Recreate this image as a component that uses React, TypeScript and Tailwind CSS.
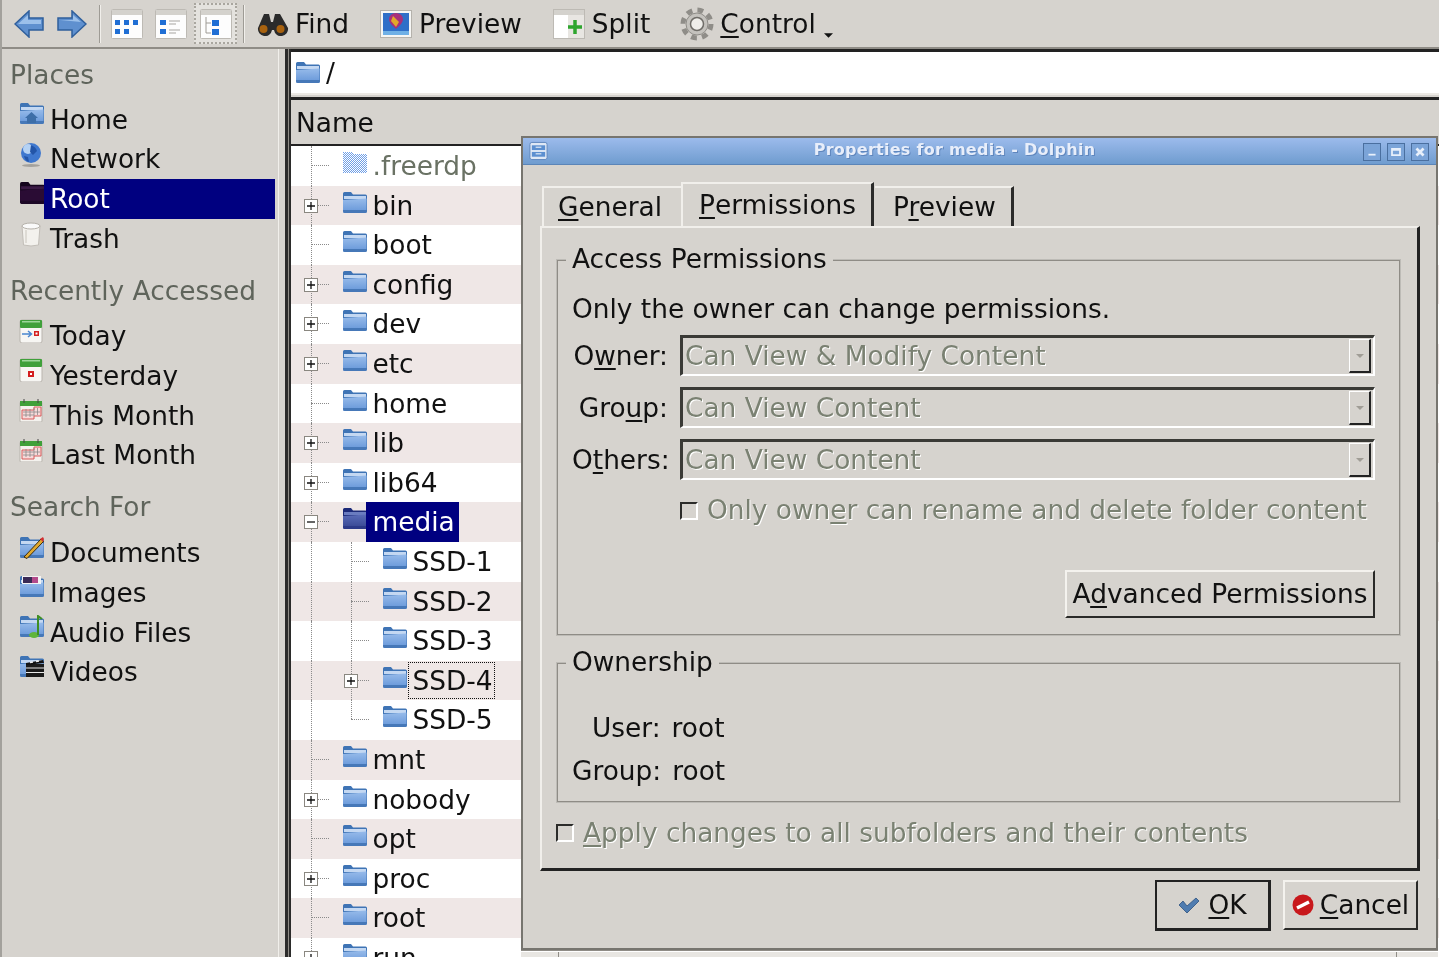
import { ReactNode } from 'react';

type Tone = 'blue' | 'dark' | 'media';

const tones = {
  blue: { back: '#3f74b5', front: 'url(#folderBlue)', strip: '#c4d8f2', low: '#4678b8' },
  dark: { back: '#14041c', front: '#2a0c34', strip: '#3a1a44', low: '#1c0826' },
  media: { back: '#1c2a78', front: 'url(#folderMedia)', strip: '#6a7cc0', low: '#2c3a88' },
};

function Folder({ tone = 'blue', className = 'w-[25px] h-[23px]', children }: { tone?: Tone; className?: string; children?: ReactNode }) {
  const c = tones[tone];
  return (
    <svg viewBox="0 0 25 23" className={className}>
      <path d="M1 2.500Q1 1 2.500 1H9l2 2.500H23.500Q25 3.500 25 5V20Q25 22 23 22H3Q1 22 1 20Z" fill={c.back} />
      <rect x="2" y="5" width="22" height="3" fill={c.strip} />
      <path d="M1 9L24.500 7.500V20Q24.500 22 23 22H3Q1 22 1 20Z" fill={c.front} />
      <path d="M1 19H25V20Q25 22 23 22H3Q1 22 1 20Z" fill={c.low} />
      {children}
    </svg>
  );
}

function DitherFolder() {
  return (
    <svg viewBox="0 0 25 23" className="w-[25px] h-[23px]">
      <defs>
        <pattern id="dither" width="2" height="2" patternUnits="userSpaceOnUse">
          <rect width="2" height="2" fill="#ffffff" />
          <rect width="1" height="1" fill="#6f9fe6" />
          <rect x="1" y="1" width="1" height="1" fill="#6f9fe6" />
        </pattern>
      </defs>
      <path d="M1 1H10L12 3H25V22H1Z" fill="url(#dither)" />
    </svg>
  );
}

function CalendarIcon({ kind }: { kind: 'today' | 'yesterday' | 'month' }) {
  return (
    <svg viewBox="0 0 24 24" className="w-6 h-6">
      {kind === 'month' ? (
        <>
          <rect x="1" y="4" width="22" height="20" rx="1" fill="#f4f2ee" stroke="#b9b5ae" />
          <rect x="1" y="3" width="22" height="5" fill="#3fa03a" />
          <path d="M5 1v4M19 1v4" stroke="#444" strokeWidth="1" />
          <path d="M3 12h12v-3h7v9h-7v3H3Z" fill="#f8dada" stroke="#d65a5a" />
          <path d="M7 11v8M11 11v8M15 10v8M18.500 10v7M4 14h17M4 17h11" stroke="#8b8b8b" strokeWidth="0.8" />
        </>
      ) : (
        <>
          <rect x="1" y="1" width="22" height="23" rx="2" fill="#f7f6f3" stroke="#b9b5ae" />
          <rect x="1" y="1" width="22" height="8" rx="1" fill="#3fa03a" />
          <rect x="3" y="2" width="18" height="1.500" fill="#9dd69a" />
          {kind === 'today' ? (
            <>
              <path d="M3 15h9M9 12l3.500 3L9 18" stroke="#4a86cf" strokeWidth="1.500" fill="none" />
              <rect x="15" y="12" width="5" height="5" fill="#d31e1e" />
              <rect x="16.500" y="13.500" width="2" height="2" fill="#fff" />
            </>
          ) : (
            <>
              <rect x="9" y="13" width="6" height="6" fill="#d31e1e" />
              <rect x="11" y="15" width="2" height="2" fill="#fff" />
            </>
          )}
        </>
      )}
    </svg>
  );
}

const placeIcons: Record<string, ReactNode> = {
  Home: (
    <Folder>
      <path d="M12.500 10L19 16H17V21H8V16H6Z" fill="#3d6ea8" />
    </Folder>
  ),
  Network: (
    <svg viewBox="0 0 24 26" className="w-6 h-[26px]">
      <ellipse cx="12" cy="23.500" rx="9" ry="1.500" fill="#a5a29c" />
      <circle cx="12" cy="11" r="10" fill="#3f78cf" />
      <circle cx="9" cy="7" r="5" fill="#b5d2f4" />
      <path d="M12 3q5 2 6 6l-4 4-3-3ZM5 14l4 1 1 5q-4-1-5-6Z" fill="#2355a8" />
    </svg>
  ),
  Root: <Folder tone="dark" className="w-[26px] h-[24px]" />,
  Trash: (
    <svg viewBox="0 0 24 26" className="w-6 h-[26px]">
      <path d="M3 5H21L19.500 24Q12 26 4.500 24Z" fill="#f3f1ed" stroke="#c2beb8" />
      <ellipse cx="12" cy="5" rx="9" ry="3" fill="#fafafa" stroke="#b5b1aa" />
      <path d="M7 9V22" stroke="#dedbd5" strokeWidth="2" />
    </svg>
  ),
  Today: <CalendarIcon kind="today" />,
  Yesterday: <CalendarIcon kind="yesterday" />,
  'This Month': <CalendarIcon kind="month" />,
  'Last Month': <CalendarIcon kind="month" />,
  Documents: (
    <Folder>
      <path d="M5 21L22 3l2.500 2.500L8 22.500Z" fill="#e0a92e" stroke="#3b2a0c" />
      <path d="M21 3l3-2 1 2-1 3Z" fill="#d32f2f" />
    </Folder>
  ),
  Images: (
    <Folder>
      <rect x="3" y="1" width="19" height="8" fill="#f3f3f3" />
      <rect x="4" y="2" width="9" height="6" fill="#3a2a55" />
      <rect x="13" y="2" width="6" height="6" fill="#b34a8a" />
    </Folder>
  ),
  'Audio Files': (
    <Folder>
      <ellipse cx="15" cy="20" rx="5" ry="3" fill="#5fb53a" />
      <path d="M19 20V1l4 3" stroke="#3f8f24" strokeWidth="2" fill="none" />
    </Folder>
  ),
  Videos: (
    <Folder>
      <rect x="7" y="9" width="18" height="13" fill="#1b1b1b" />
      <path d="M7 13h18M7 17.500h18" stroke="#e8e8e8" strokeWidth="1.200" />
      <path d="M7 8l17-3 1 3-18 2Z" fill="#111" />
      <path d="M11 7.500l3-.5M17 6.500l3-.5" stroke="#eee" strokeWidth="1.500" />
    </Folder>
  ),
};

const sidebarGroups = [
  { title: 'Places', mt: 'mt-[6px]', listMt: 'mt-[5px]', items: ['Home', 'Network', 'Root', 'Trash'] },
  { title: 'Recently Accessed', mt: 'mt-[12px]', listMt: 'mt-[6px]', items: ['Today', 'Yesterday', 'This Month', 'Last Month'] },
  { title: 'Search For', mt: 'mt-[12px]', listMt: 'mt-[6px]', items: ['Documents', 'Images', 'Audio Files', 'Videos'] },
];

const treeRows: { name: string; sign?: '+' | '-'; level?: number; last?: boolean }[] = [
  { name: '.freerdp' },
  { name: 'bin', sign: '+' },
  { name: 'boot' },
  { name: 'config', sign: '+' },
  { name: 'dev', sign: '+' },
  { name: 'etc', sign: '+' },
  { name: 'home' },
  { name: 'lib', sign: '+' },
  { name: 'lib64', sign: '+' },
  { name: 'media', sign: '-' },
  { name: 'SSD-1', level: 1 },
  { name: 'SSD-2', level: 1 },
  { name: 'SSD-3', level: 1 },
  { name: 'SSD-4', level: 1, sign: '+' },
  { name: 'SSD-5', level: 1, last: true },
  { name: 'mnt' },
  { name: 'nobody', sign: '+' },
  { name: 'opt' },
  { name: 'proc', sign: '+' },
  { name: 'root' },
  { name: 'run', sign: '+' },
];

function Mn({ children }: { children: ReactNode }) {
  return <span className="underline decoration-[1.5px] underline-offset-[3px]">{children}</span>;
}

function Expander({ sign, className }: { sign: '+' | '-'; className: string }) {
  return (
    <span className={`absolute w-[14px] h-[14px] bg-white border-[1.5px] border-[#8a8780] flex items-center justify-center ${className}`}>
      <svg viewBox="0 0 10 10" className="w-[10px] h-[10px]">
        <path d={sign === '+' ? 'M1 5H9M5 1V9' : 'M1 5H9'} stroke="#111" strokeWidth="1.300" />
      </svg>
    </span>
  );
}

function TreeRow({ row, index }: { row: (typeof treeRows)[number]; index: number }) {
  const level = row.level ?? 0;
  const selected = row.name === 'media';
  const focused = row.name === 'SSD-4';
  return (
    <div className={`relative h-[39.6px] flex items-center ${index % 2 ? 'bg-[#efe7e6]' : 'bg-white'} ${level ? 'pl-[90.5px]' : 'pl-[50.5px]'}`}>
      <span className="absolute left-[19.500px] inset-y-0 border-l-[1.5px] border-dotted border-[#8a8a8a]" />
      {level === 1 && (
        <span className={`absolute left-[59.500px] top-0 border-l-[1.5px] border-dotted border-[#8a8a8a] ${row.last ? 'h-[19px]' : 'h-full'}`} />
      )}
      <span className={`absolute top-[19px] w-[18px] border-t-[1.5px] border-dotted border-[#8a8a8a] ${level ? 'left-[60px]' : 'left-[20px]'}`} />
      {row.sign && <Expander sign={row.sign} className={`top-[13px] ${level ? 'left-[53px]' : 'left-[13px]'}`} />}
      <span className="self-start mt-[5px] shrink-0">
        {row.name === '.freerdp' ? <DitherFolder /> : <Folder tone={selected ? 'media' : 'blue'} />}
      </span>
      <span
        className={`ml-[-1px] pl-[7px] pr-[4px] ${selected ? 'bg-[#000080] text-white h-full flex items-center' : ''} ${focused ? 'outline-dotted outline-[1.5px] outline-[#111] outline-offset-[-3px] py-[1px]' : ''} ${row.name === '.freerdp' ? 'text-[#6a7264]' : 'text-[#111]'}`}
      >
        {row.name}
      </span>
    </div>
  );
}

function Combo({ text }: { text: string }) {
  return (
    <div className="flex-1 h-[41px] border-t-[3px] border-l-[3px] border-t-[#3a3a36] border-l-[#3a3a36] border-b-2 border-r-2 border-b-white border-r-white flex items-center pl-[2px] pr-[2px]">
      <span className="flex-1 text-[#7a8172] [text-shadow:1px_1px_0_#ffffff] leading-none">{text}</span>
      <span className="w-[22px] h-[34px] border-r-2 border-b-2 border-r-[#222] border-b-[#222] border-l border-t border-l-white border-t-white flex items-center justify-center">
        <svg viewBox="0 0 10 6" className="w-[10px] h-[6px]">
          <path d="M1 1H9L5 5Z" fill="#a09d96" />
        </svg>
      </span>
    </div>
  );
}

function Check() {
  return <span className="w-[18px] h-[18px] shrink-0 border-t-2 border-l-2 border-t-[#2c2c2a] border-l-[#2c2c2a] border-b-2 border-r-2 border-b-white border-r-white" />;
}

function GroupBox({ title, className, children }: { title: string; className: string; children: ReactNode }) {
  return (
    <div className={`relative border-2 border-[#8f8c86] outline outline-1 outline-offset-[-1px] outline-[#eceae6]/50 ${className}`}>
      <span className="absolute left-[8px] top-[-19px] bg-[#d6d3ce] px-[6px] leading-[33px] h-[33px] text-[#111]">{title}</span>
      {children}
    </div>
  );
}

function PermissionRow({ label, text }: { label: ReactNode; text: string }) {
  return (
    <div className="flex items-center h-[41px] mb-[11px]">
      <span className="w-[108px] pr-[12px] text-right text-[#111] leading-none whitespace-nowrap">{label}</span>
      <Combo text={text} />
    </div>
  );
}

function Dialog() {
  return (
    <div className="absolute left-[521px] top-[136px] w-[917px] h-[821px] flex flex-col">
      <div className="h-[814px] border-2 border-[#77756f] bg-[#d6d3ce] flex flex-col">
        <div className="h-[27px] shrink-0 bg-gradient-to-b from-[#9cbbec] to-[#6f9ccf] border-b border-[#5b85b8] flex items-center relative">
          <svg viewBox="0 0 20 20" className="absolute left-[6px] top-[3px] w-[19px] h-[20px]">
            <rect x="1" y="1" width="18" height="18" rx="2" fill="#dfe8f5" stroke="#5f86bd" />
            <rect x="3" y="4" width="14" height="5" fill="#5c8fd0" />
            <rect x="3" y="11" width="14" height="5" fill="#5c8fd0" />
            <path d="M7 6h6M7 13h6" stroke="#fff" />
          </svg>
          <span className="flex-1 text-center text-[16px] font-bold text-[#e8eefa] [text-shadow:1px_1px_0_#5f86bd] tracking-[0.26px] pr-[50px] mt-[-2px]">
            Properties for media - Dolphin
          </span>
          <div className="absolute right-[7px] top-[5px] flex gap-[6px]">
            {['M5 12H13', 'M4.500 5.500H13.500V12.500H4.500ZM4.500 6.500H13.500', 'M5 5L13 13M13 5L5 13'].map((d, i) => (
              <span key={i} className="w-[18px] h-[18px] bg-[#7ba4d8] border border-[#4a6f9f]">
                <svg viewBox="0 0 18 18" className="w-4 h-4">
                  <path d={d} stroke="#e8f0fb" strokeWidth={i === 2 ? 3 : 2} fill="none" />
                </svg>
              </span>
            ))}
          </div>
        </div>

        <div className="pl-[17px] pr-[16px] text-[26.4px] flex-1 flex flex-col">
          {/* Tabs */}
          <div className="flex items-end h-[61px] pl-[2px] shrink-0">
            <span className="h-[40px] w-[139px] pl-[14px] flex items-center border-t-2 border-l-2 border-[#f1efeb] text-[#111] leading-none">
              <span className="mt-[1px]"><Mn>G</Mn>eneral</span>
            </span>
            <span className="h-[44px] w-[193px] pl-[16px] flex items-center border-t-2 border-l-2 border-[#f1efeb] border-r-[3px] border-r-[#2b2b2a] text-[#111] leading-none">
              <Mn>P</Mn>ermissions
            </span>
            <span className="ml-[1px] h-[40px] w-[139px] pl-[18px] flex items-center border-t-2 border-[#f1efeb] border-r-[3px] border-r-[#2b2b2a] text-[#111] leading-none">
              <span className="mt-[1px]">P<Mn>r</Mn>eview</span>
            </span>
          </div>

          {/* Pane */}
          <div className="h-[645px] shrink-0 border-t-2 border-l-2 border-[#f1efeb] border-b-[3px] border-r-[3px] border-b-[#222] border-r-[#222] pl-[14px] pr-[16px] pt-[31px]">
            <GroupBox title="Access Permissions" className="h-[377px] pl-[14px] pr-[24px] pt-[30px]">
              <p className="text-[#111] leading-none mb-[13px] mt-[5px] whitespace-nowrap">Only the owner can change permissions.</p>
              <PermissionRow label={<>O<Mn>w</Mn>ner:</>} text="Can View & Modify Content" />
              <PermissionRow label={<>Gro<Mn>u</Mn>p:</>} text="Can View Content" />
              <PermissionRow label={<>O<Mn>t</Mn>hers:</>} text="Can View Content" />
              <div className="flex items-center ml-[108px] gap-[9px] mt-[17px]">
                <Check />
                <span className="text-[#7a8172] [text-shadow:1px_1px_0_#ffffff] whitespace-nowrap leading-none">
                  Only own<Mn>e</Mn>r can rename and delete folder content
                </span>
              </div>
              <div className="flex justify-end mt-[46px]">
                <button className="h-[48px] w-[310px] border-2 border-t-[#f4f2ee] border-l-[#f4f2ee] border-b-[#2a2a28] border-r-[#2a2a28] text-[#111] leading-none whitespace-nowrap">
                  A<Mn>d</Mn>vanced Permissions
                </button>
              </div>
            </GroupBox>
            <GroupBox title="Ownership" className="h-[141px] mt-[26px] pl-[14px] pt-[50px]">
              <div className="flex flex-col gap-[16px] leading-[27px] text-[#111]">
                <span className="flex gap-[11px] pl-[20px]"><span>User:</span><span>root</span></span>
                <span className="flex gap-[11px]"><span>Group:</span><span>root</span></span>
              </div>
            </GroupBox>
            <div className="flex items-center gap-[9px] mt-[17px]">
              <Check />
              <span className="text-[#7a8172] [text-shadow:1px_1px_0_#ffffff] whitespace-nowrap leading-none">
                <Mn>A</Mn>pply changes to all subfolders and their contents
              </span>
            </div>
          </div>

          {/* Buttons */}
          <div className="flex justify-end gap-[12px] mt-[9px] pr-[2px]">
            <button className="h-[51px] w-[116px] border-2 border-[#222] border-b-[3px] border-r-[3px] flex items-center justify-center gap-[8px] text-[#111] leading-none">
              <svg viewBox="0 0 22 18" className="w-[22px] h-[18px]">
                <path d="M1 9L5 5L9 10L18 2L21 5L9 17Z" fill="#4f7cb0" stroke="#2d527f" strokeWidth="0.800" />
              </svg>
              <span><Mn>O</Mn>K</span>
            </button>
            <button className="h-[50px] w-[135px] border-2 border-t-[#f4f2ee] border-l-[#f4f2ee] border-b-[#2a2a28] border-r-[#2a2a28] flex items-center justify-center gap-[6px] text-[#111] leading-none">
              <svg viewBox="0 0 22 22" className="w-[22px] h-[22px]">
                <circle cx="11" cy="11" r="10.500" fill="#c8181c" />
                <path d="M5 14L17 8" stroke="#fff" strokeWidth="3.500" />
              </svg>
              <span><Mn>C</Mn>ancel</span>
            </button>
          </div>
        </div>
      </div>
      <div className="flex-1 flex border-t border-[#8f8c86] pt-[1px]">
        <span className="w-[38px] h-[5px] bg-[#e8e6e2] border-r border-[#8f8c86]" />
        <span className="flex-1 h-[5px] bg-[#e8e6e2]" />
        <span className="w-[42px] h-[5px] bg-[#e8e6e2] border-l border-[#8f8c86]" />
      </div>
    </div>
  );
}

function ToolSeparator() {
  return <span className="block w-[2px] h-[38px] bg-[#9e9b95] border-r border-[#f1efeb] shrink-0" />;
}

function ViewIcon({ variant }: { variant: 'icons' | 'details' | 'tree' }) {
  return (
    <svg viewBox="0 0 32 30" className="w-[32px] h-[30px]">
      <rect x="0.500" y="0.500" width="31" height="29" rx="1" fill="#fdfdfd" stroke="#bdbab4" />
      <rect x="1" y="1" width="30" height="5" fill="#d4d2cd" />
      {variant === 'icons' && (
        <path d="M4 11h5v5H4ZM13 11h5v5h-5ZM22 11h5v5h-5ZM4 20h5v5H4ZM13 20h5v5h-5Z" fill="#1f6ed4" />
      )}
      {variant === 'details' && (
        <>
          <path d="M5 11h6v5H5ZM5 20h6v5H5Z" fill="#1f6ed4" />
          <path d="M14 12h11M14 15h7M14 21h11M14 24h7" stroke="#a8a6a1" strokeWidth="1.200" />
        </>
      )}
      {variant === 'tree' && (
        <>
          <path d="M6 8v16h5M6 14h5" stroke="#9e9b95" fill="none" />
          <path d="M12 11h7v6h-7ZM12 20h7v6h-7Z" fill="#1f6ed4" />
        </>
      )}
    </svg>
  );
}

function Toolbar() {
  return (
    <div className="h-[47px] shrink-0 flex items-center text-[26.4px] text-[#111] leading-none">
      <svg viewBox="0 0 30 28" className="ml-[14px] w-[30px] h-[28px] shrink-0">
        <path d="M1 14L15 1V8H29V20H15V27Z" fill="#5f90cf" stroke="#2f5f9c" strokeWidth="1.500" />
        <path d="M4 14L14 5V10H27V14Z" fill="#9cc0ea" />
      </svg>
      <svg viewBox="0 0 30 28" className="ml-[13px] w-[30px] h-[28px] shrink-0">
        <path d="M29 14L15 1V8H1V20H15V27Z" fill="#5f90cf" stroke="#2f5f9c" strokeWidth="1.500" />
        <path d="M3 10H16V5L24 12Z" fill="#9cc0ea" />
      </svg>
      <span className="ml-[12px]"><ToolSeparator /></span>
      <span className="ml-[10px]"><ViewIcon variant="icons" /></span>
      <span className="ml-[12px]"><ViewIcon variant="details" /></span>
      <span className="ml-[7px] w-[43px] h-[41px] flex items-center justify-center border-2 border-dotted border-[#a9a69f] bg-[#e4e2de]">
        <ViewIcon variant="tree" />
      </span>
      <span className="ml-[6px]"><ToolSeparator /></span>
      <svg viewBox="0 0 34 24" className="ml-[10px] w-[34px] h-[24px] shrink-0">
        <path d="M9 2h5l2 8h2l2-8h5l8 14a7 7 0 1 1-14 2h-2a7 7 0 1 1-14-2Z" fill="#2b2b2b" />
        <circle cx="8.500" cy="17" r="4" fill="#a8620f" />
        <circle cx="25.500" cy="17" r="4" fill="#a8620f" />
      </svg>
      <span className="ml-[6px] mt-[2px]">Find</span>
      <svg viewBox="0 0 32 28" className="ml-[31px] w-[32px] h-[28px] shrink-0">
        <rect x="0.500" y="0.500" width="31" height="27" fill="#f6f6f4" stroke="#b5b2ac" />
        <rect x="3" y="3" width="26" height="22" fill="#2f6fc8" />
        <path d="M9 9a7 6 0 0 1 14 0c0 4-4 7-7 10-3-3-7-6-7-10Z" fill="#a8307a" />
        <path d="M13 6l6 6-3 5-5-6Z" fill="#e2a92a" />
        <path d="M3 21h26v4H3Z" fill="#6fb0e6" />
      </svg>
      <span className="ml-[7px] mt-[2px]">Preview</span>
      <svg viewBox="0 0 32 30" className="ml-[31px] w-[32px] h-[30px] shrink-0">
        <rect x="0.500" y="0.500" width="31" height="29" fill="#e8e6e2" stroke="#bdbab4" />
        <rect x="1" y="1" width="30" height="5" fill="#d4d2cd" />
        <rect x="1" y="6" width="14" height="23" fill="#ffffff" />
        <path d="M22 11v14M15 18h14" stroke="#2ea52e" strokeWidth="3.500" />
      </svg>
      <span className="ml-[7px] mt-[2px]">Split</span>
      <svg viewBox="0 0 34 34" className="ml-[30px] w-[34px] h-[34px] shrink-0">
        <circle cx="17" cy="17" r="14" fill="none" stroke="#8f8d88" strokeWidth="5" strokeDasharray="5.800 5.200" />
        <circle cx="17" cy="17" r="11" fill="#c4c2bd" stroke="#8f8d88" />
        <circle cx="17" cy="17" r="6.500" fill="#efeeea" stroke="#6f6d68" strokeWidth="1.500" />
      </svg>
      <span className="ml-[6px] mt-[2px]"><Mn>C</Mn>ontrol</span>
      <svg viewBox="0 0 10 5" className="ml-[8px] mt-[24px] w-[9px] h-[5px] shrink-0">
        <path d="M0 0H10L5 5Z" fill="#111" />
      </svg>
    </div>
  );
}

function Sidebar() {
  return (
    <div className="w-[279px] shrink-0 border-r border-[#f1efeb] text-[26.4px] pl-[10px]">
      {sidebarGroups.map((group) => (
        <div key={group.title} className={group.mt}>
          <div className="h-[40px] flex items-center text-[#5f645b] leading-none whitespace-nowrap">{group.title}</div>
          <div className={group.listMt}>
            {group.items.map((item) => {
              const selected = item === 'Root';
              return (
                <div key={item} className="flex h-[39.7px] items-center">
                  <span className="w-[34px] shrink-0 pl-[9px] self-start mt-[2px]">{placeIcons[item]}</span>
                  <span className={`w-[231px] h-full flex items-center pl-[6px] leading-none ${selected ? 'bg-[#000080] text-white' : 'text-[#111]'}`}>
                    {item}
                  </span>
                </div>
              );
            })}
          </div>
        </div>
      ))}
    </div>
  );
}

export default function App() {
  return (
    <div className="relative h-[957px] w-[1439px] overflow-hidden bg-[#d6d3ce] flex flex-col [font-family:'DejaVu_Sans',sans-serif] [filter:blur(0.35px)]">
      <svg className="absolute w-0 h-0">
        <defs>
          <linearGradient id="folderBlue" x1="0" y1="0" x2="0" y2="1">
            <stop offset="0" stopColor="#97bbea" />
            <stop offset="1" stopColor="#6495d8" />
          </linearGradient>
          <linearGradient id="folderMedia" x1="0" y1="0" x2="0" y2="1">
            <stop offset="0" stopColor="#5a6cb8" />
            <stop offset="1" stopColor="#34448f" />
          </linearGradient>
        </defs>
      </svg>
      <span className="absolute left-0 inset-y-0 w-[2px] bg-[#a3a19c]" />
      <Toolbar />
      <div className="flex-1 flex border-t-2 border-t-[#8f8c86] min-h-0">
        <Sidebar />
        <div className="w-[12px] shrink-0 flex justify-end">
          <span className="w-[3px] h-full bg-[#2b2b2a]" />
          <span className="w-[1px] h-full bg-[#8f8c86]" />
          <span className="w-[2px] h-full bg-[#2b2b2a]" />
        </div>
        <div className="flex-1 min-w-0 flex flex-col text-[26.4px]">
          <div className="h-[46px] shrink-0 bg-white border-t-[3px] border-t-[#222] border-b-2 border-b-[#ece9e4] flex items-center pl-[4px] gap-[6px] text-[#111]">
            <Folder />
            <span className="leading-none mt-[2px]">/</span>
          </div>
          <div className="h-[49px] shrink-0 mt-[2px] bg-[#d6d3ce] border-t-[3px] border-t-[#222] border-b-2 border-b-[#222] flex items-center pl-[5px] pt-[2px] text-[#111] leading-none">
            Name
          </div>
          <div className="flex-1 min-h-0">
            {treeRows.map((row, i) => (
              <TreeRow key={row.name} row={row} index={i} />
            ))}
          </div>
        </div>
      </div>
      <Dialog />
    </div>
  );
}
